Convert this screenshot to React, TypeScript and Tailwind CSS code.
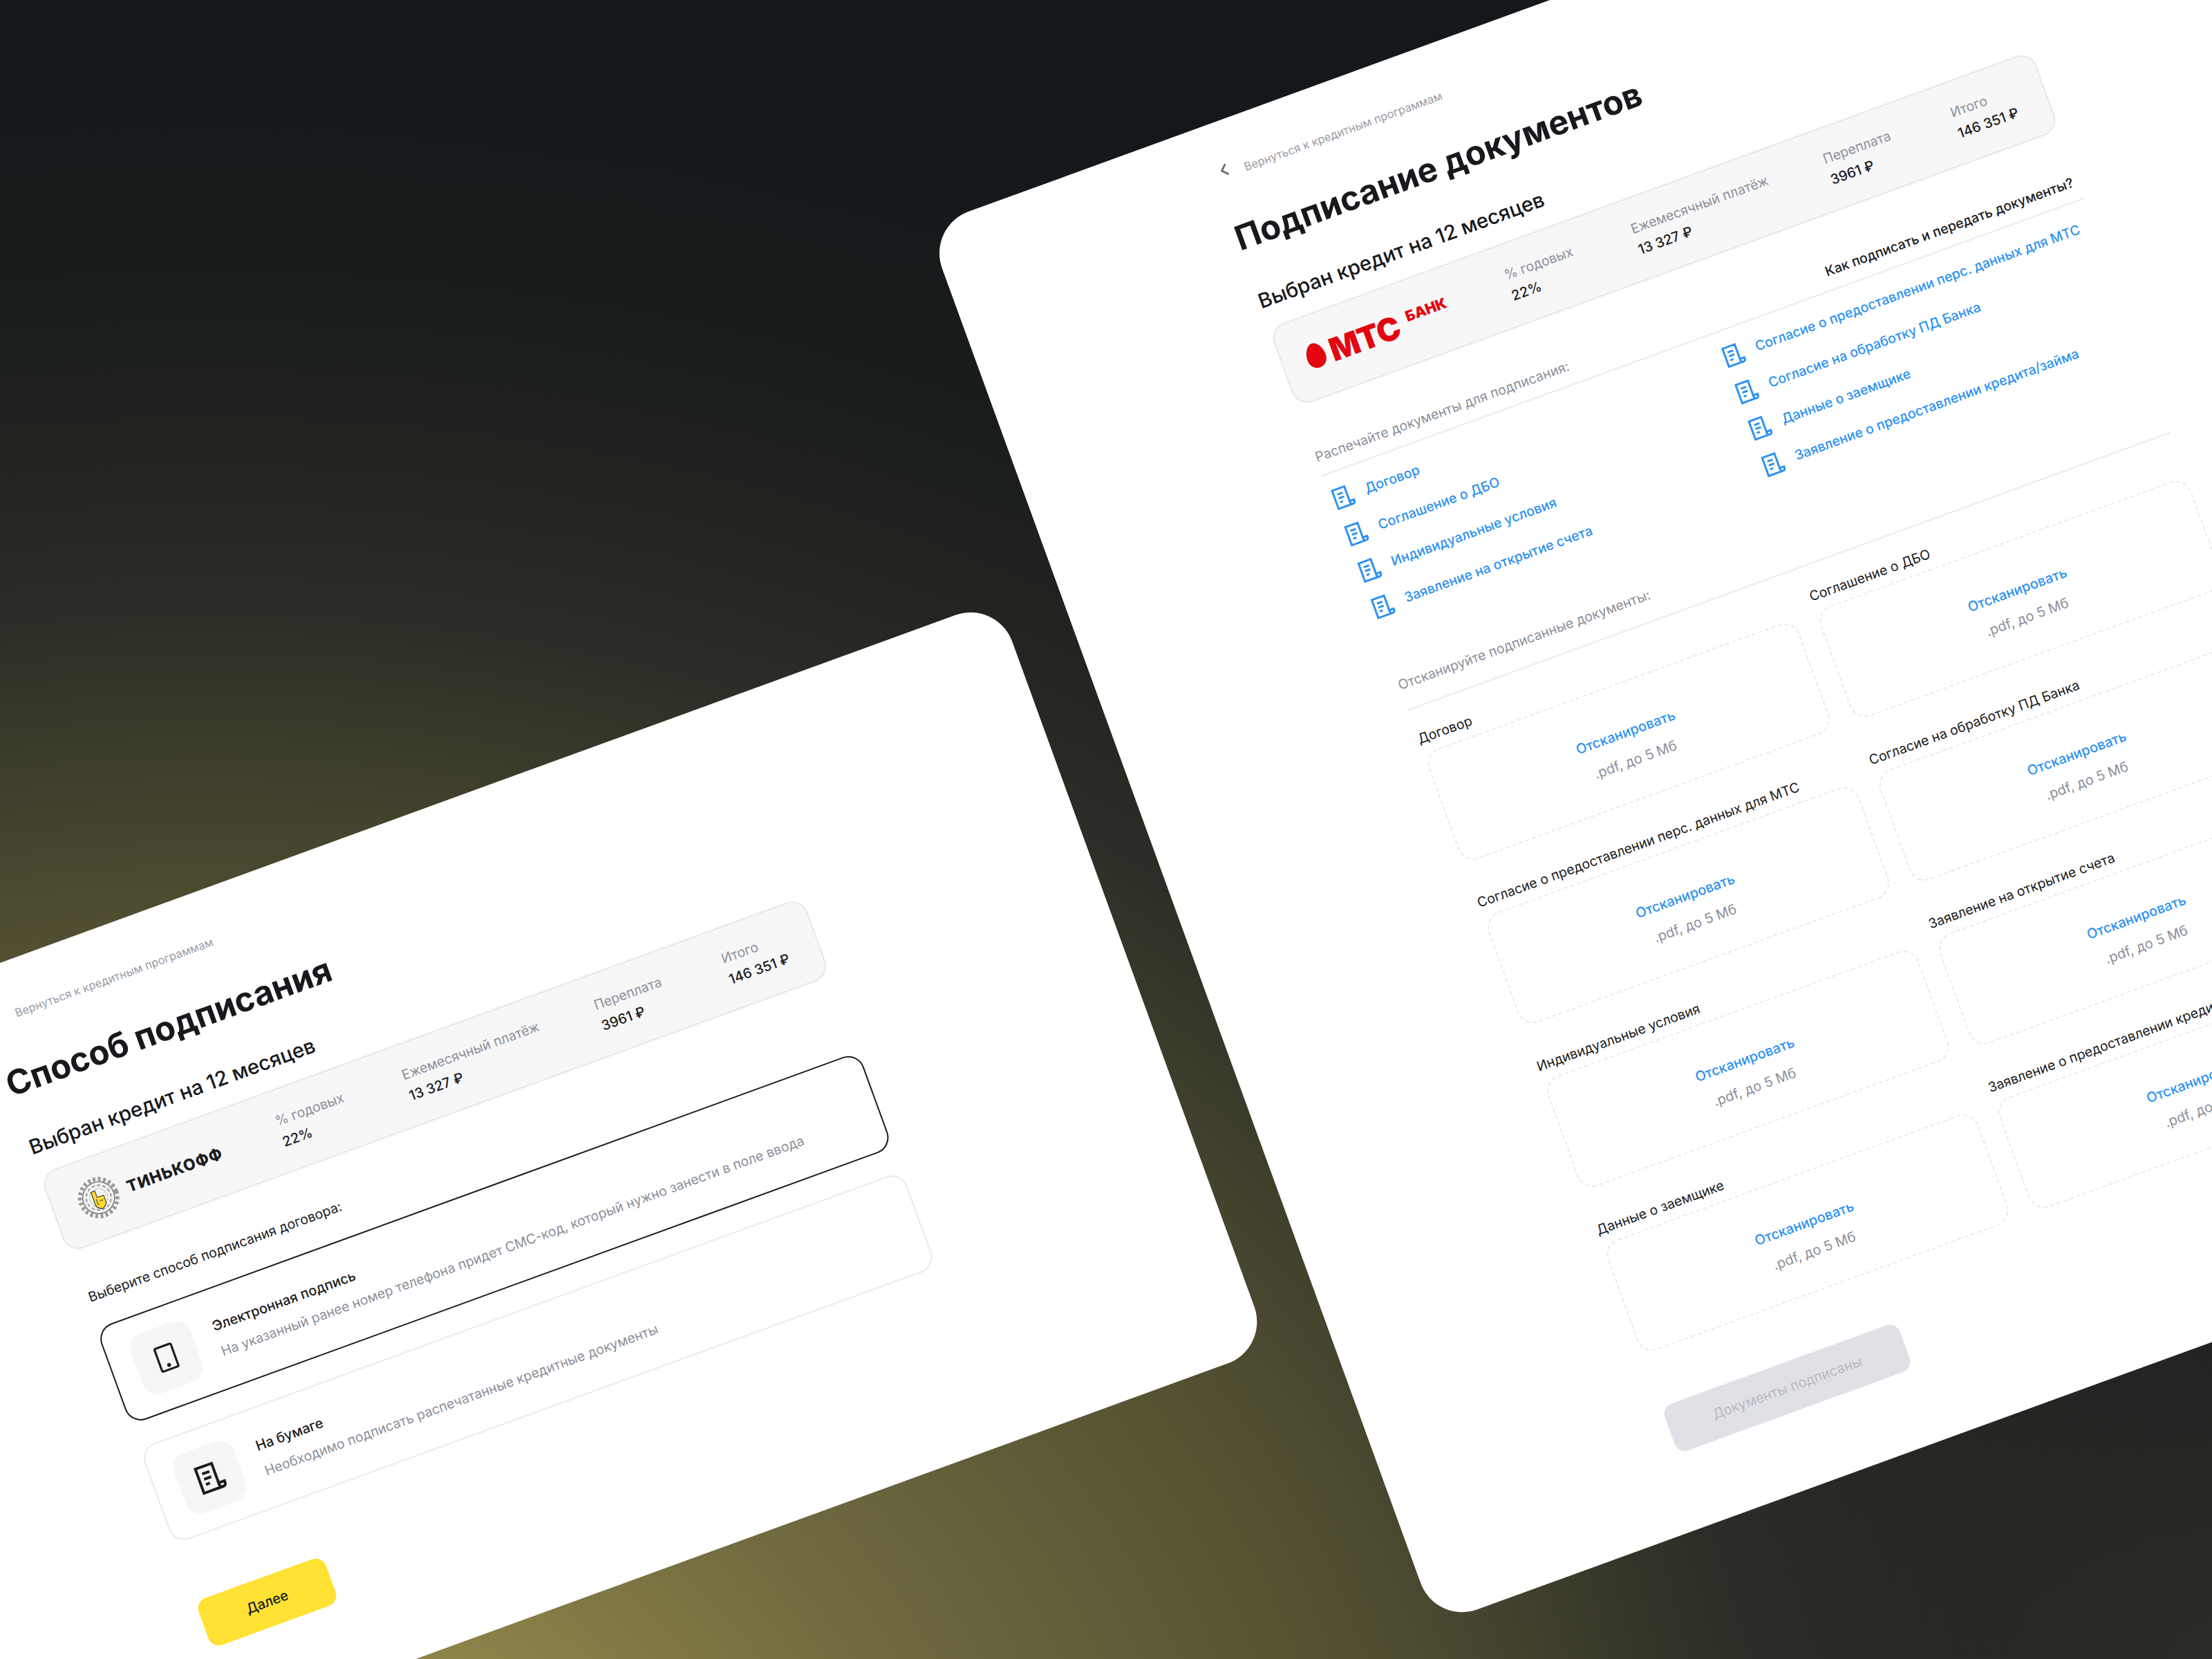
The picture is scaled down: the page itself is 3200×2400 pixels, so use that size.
import { ChevronLeft } from 'lucide-react'

const LEFT_DOCS = ['Договор', 'Соглашение о ДБО', 'Индивидуальные условия', 'Заявление на открытие счета']
const RIGHT_DOCS = [
  'Согласие о предоставлении перс. данных для МТС',
  'Согласие на обработку ПД Банка',
  'Данные о заемщике',
  'Заявление о предоставлении кредита/займа',
]
const SCANS = [
  'Договор',
  'Соглашение о ДБО',
  'Согласие о предоставлении перс. данных для МТС',
  'Согласие на обработку ПД Банка',
  'Индивидуальные условия',
  'Заявление на открытие счета',
  'Данные о заемщике',
  'Заявление о предоставлении кредита/займа',
]

function DocIcon({ className }: { className: string }) {
  return (
    <svg viewBox="0 0 24 24" fill="none" stroke="currentColor" strokeWidth="2" className={className}>
      <path d="M4 3h12.5v15h4.5v1.5a2 2 0 0 1-2 2H4z" />
      <path d="M16.5 18v1.5a2 2 0 0 0 2 2" />
      <path d="M7.5 8h5.5M7.5 12h5.5M7.5 16h3" />
    </svg>
  )
}

function MtsLogo() {
  return (
    <div className="flex items-start pl-[35px] text-[#e30611] font-black">
      <svg viewBox="0 0 26 34" className="w-[28px] h-[37px] mt-[6px]">
        <path d="M13 0C6 0 0 10 0 20c0 8 6 14 13 14s13-6 13-14C26 10 20 0 13 0z" fill="currentColor" />
      </svg>
      <span className="ml-[8px] text-[46px] leading-[50px] tracking-[-1px]">МТС</span>
      <span className="ml-[14px] mt-[3px] text-[21px] leading-[28px]">БАНК</span>
    </div>
  )
}

function TinkoffLogo() {
  return (
    <div className="flex items-center pl-[35px]">
      <svg viewBox="0 0 64 64" className="w-[64px] h-[64px]">
        <circle cx="32" cy="32" r="27" fill="none" stroke="#9a9a9a" strokeWidth="6" strokeDasharray="4 3.5" />
        <circle cx="32" cy="32" r="23" fill="#f4f4f4" stroke="#777" strokeWidth="1.5" />
        <circle cx="32" cy="32" r="18" fill="none" stroke="#999" strokeWidth="2" strokeDasharray="5 3" />
        <circle cx="32" cy="32" r="13" fill="none" stroke="#bbb" strokeWidth="1.5" strokeDasharray="3 2" />
        <path d="M24 21h6v10h10v10c0 4-4 6-8 8-4-2-8-4-8-8z" fill="#ffdd2d" stroke="#444" strokeWidth="1.2" />
        <path d="M28 33v9M32 37h5" stroke="#444" strokeWidth="1.2" />
      </svg>
      <span className="ml-[12px] text-[23px] leading-[28px] font-extrabold tracking-[1px] text-[#1c1c1e]">ТИНЬКОФФ</span>
    </div>
  )
}

function Stat({ label, value, className }: { label: string; value: string; className: string }) {
  return (
    <div className={className}>
      <div className="text-[19.5px] leading-[28px] text-[#8c8f9a]">{label}</div>
      <div className="mt-[4px] text-[20px] leading-[28px] font-medium text-[#1c1c1e]">{value}</div>
    </div>
  )
}

function Header({ title, logo }: { title: string; logo: React.ReactNode }) {
  return (
    <>
      <div className="flex items-center h-[28px] text-[16.5px] text-[#9a9ca5]">
        <ChevronLeft className="ml-[4px] w-[28px] h-[28px] mr-[15px] text-[#6d6f78]" strokeWidth={2.5} />
        <span className="mt-[12px]">Вернуться к кредитным программам</span>
      </div>
      <h1 className="mt-[55px] h-[64px] text-[49px] leading-[64px] font-bold text-[#17191c]">{title}</h1>
      <h2 className="mt-[41px] h-[44px] text-[29.5px] leading-[44px] font-medium text-[#17191c]">Выбран кредит на 12 месяцев</h2>
      <div className="mt-[19px] h-[122px] flex items-center rounded-[24px] border-2 border-[#e6e7ec] bg-[#f7f7f8]">
        <div className="w-[345px] shrink-0">{logo}</div>
        <Stat label="% годовых" value="22%" className="w-[195px]" />
        <Stat label="Ежемесячный платёж" value="13 327 ₽" className="w-[296px]" />
        <Stat label="Переплата" value="3961 ₽" className="w-[196px]" />
        <Stat label="Итого" value="146 351 ₽" className="w-[110px]" />
      </div>
    </>
  )
}

function DocList({ docs }: { docs: string[] }) {
  return (
    <div className="flex flex-col gap-[24px]">
      {docs.map(doc => (
        <div key={doc} className="flex items-center h-[32px] text-[#2e92f0] whitespace-nowrap">
          <DocIcon className="w-[36px] h-[36px] shrink-0" />
          <span className="ml-[16px] text-[19.5px] leading-[28px] font-medium">{doc}</span>
        </div>
      ))}
    </div>
  )
}

function ScanCell({ title }: { title: string }) {
  return (
    <div className="h-[252px] pt-[4px] whitespace-nowrap">
      <div className="h-[28px] text-[19.5px] leading-[28px] text-[#1c1c1e]">{title}</div>
      <div className="mt-[8px] h-[170px] pt-[14px] flex flex-col items-center justify-center rounded-[24px] border-2 border-dashed border-[#e9eaee]">
        <div className="text-[20px] leading-[28px] font-medium text-[#2e92f0]">Отсканировать</div>
        <div className="mt-[14px] text-[20px] leading-[28px] text-[#8c8f9a]">.pdf, до 5 Мб</div>
      </div>
    </div>
  )
}

function OptionCard({ title, text, active, icon }: { title: string; text: string; active: boolean; icon: React.ReactNode }) {
  return (
    <div className={`h-[148px] flex items-center rounded-[24px] border-2 pl-[34px] ${active ? 'border-[#1c1c1e]' : 'border-[#e9eaee]'}`}>
      <div className="w-[92px] h-[92px] flex items-center justify-center rounded-[22px] bg-[#f6f6f7] text-[#1c1c1e] shrink-0">{icon}</div>
      <div className="ml-[32px]">
        <div className="text-[20px] leading-[28px] font-medium text-[#1c1c1e]">{title}</div>
        <div className="mt-[10px] text-[19.5px] leading-[28px] text-[#8c8f9a]">{text}</div>
      </div>
    </div>
  )
}

export default function App() {
  return (
    <div className="relative w-[3200px] h-[2400px] overflow-hidden font-[Inter,sans-serif] bg-[#14181b] bg-[radial-gradient(1000px_1000px_at_3200px_2400px,rgba(42,44,38,1)_0%,rgba(42,44,38,0)_100%),radial-gradient(3400px_2833px_at_300px_2800px,#9a8f4c_0%,#8f8549_16.6%,#6f6a3f_31.6%,#545132_50%,#3c3c2b_60.6%,#2c2d26_67.5%,#232520_74.6%,#181c1c_85%,#14181b_99%)]">
      {/* left window */}
      <div className="absolute left-[-437px] top-[1552px] w-[2000px] h-[1152px] origin-top-left rotate-[-20deg] rounded-[64px] bg-white pl-[414px] pr-[412px] pt-[56px]">
        <Header title="Способ подписания" logo={<TinkoffLogo />} />
        <div className="mt-[56px] ml-[6px] h-[28px] text-[19.5px] leading-[28px] text-[#1c1c1e]">Выберите способ подписания договора:</div>
        <div className="mt-[32px] flex flex-col gap-[36px]">
          <OptionCard
            active
            title="Электронная подпись"
            text="На указанный ранее номер телефона придет СМС-код, который нужно занести в поле ввода"
            icon={
              <svg viewBox="0 0 32 32" fill="none" stroke="currentColor" strokeWidth="2.5" className="w-[40px] h-[40px]">
                <rect x="6" y="2" width="20" height="28" rx="1.5" />
                <circle cx="16" cy="25" r="1" fill="currentColor" />
              </svg>
            }
          />
          <OptionCard
            active={false}
            title="На бумаге"
            text="Необходимо подписать распечатанные кредитные документы"
            icon={<DocIcon className="w-[48px] h-[48px]" />}
          />
        </div>
        <button className="mt-[88px] w-[196px] h-[72px] rounded-[16px] bg-[#ffe233] text-[20px] font-medium text-[#1c1c1e]">Далее</button>
      </div>

      {/* right window */}
      <div className="absolute left-[1341px] top-[328px] w-[2008px] h-[2152px] origin-top-left rotate-[-20deg] rounded-[64px] bg-white pl-[414px] pr-[420px] pt-[56px]">
        <Header title="Подписание документов" logo={<MtsLogo />} />
        <div className="mt-[63px] h-[28px] flex justify-between pr-[8px] text-[19.5px] leading-[28px]">
          <span className="text-[#8c8f9a]">Распечайте документы для подписания:</span>
          <span className="font-medium text-[#1c1c1e]">Как подписать и передать документы?</span>
        </div>
        <div className="mt-[13px] h-[2px] bg-[#e9eaee]" />
        <div className="mt-[22px] grid grid-cols-2 gap-x-[28px]">
          <DocList docs={LEFT_DOCS} />
          <DocList docs={RIGHT_DOCS} />
        </div>
        <div className="mt-[86px] h-[28px] text-[19.5px] leading-[28px] text-[#8c8f9a]">Отсканируйте подписанные документы:</div>
        <div className="mt-[23px] h-[2px] bg-[#e9eaee]" />
        <div className="mt-[26px] grid grid-cols-2 gap-x-[32px]">
          {SCANS.map(scan => <ScanCell key={scan} title={scan} />)}
        </div>
        <button className="mt-[38px] w-[362px] h-[72px] rounded-[16px] bg-[#e0e1e6] text-[20px] text-[#b9bac1]">Документы подписаны</button>
      </div>
    </div>
  )
}
